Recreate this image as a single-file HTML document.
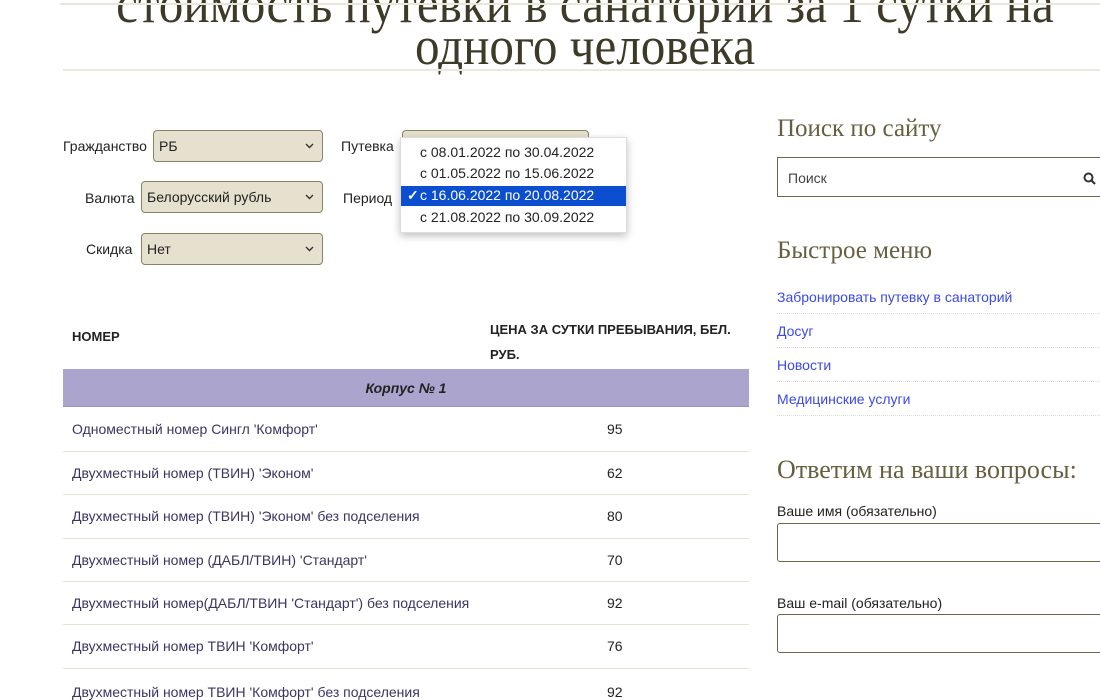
<!DOCTYPE html>
<html><head><meta charset="utf-8"><style>
*{margin:0;padding:0;box-sizing:border-box}
body{width:1100px;height:686px;overflow:hidden;background:#fff;position:relative;font-family:"Liberation Sans",sans-serif;font-size:14px;color:#222}
.a{position:absolute;white-space:nowrap}
.t{font-family:"Liberation Serif",serif;color:#3d3a28;font-size:54px;left:0;width:1170px;text-align:center;transform:scaleX(.91);transform-origin:585px 0;line-height:45px}
.sel{position:absolute;background:#e5e1ce;border:1px solid #8a8262;border-radius:4px;font-size:14px;padding:8px 5px;line-height:15px}
.sel svg{position:absolute;right:8px;top:12px}
.lab{position:absolute;font-size:14px;color:#222}
.row{position:absolute;left:63px;width:686px;height:1px;background:#e4e6d0}
.rn{position:absolute;left:72px;color:#3a3660;font-size:14px}
.rp{position:absolute;left:607px;color:#222;font-size:14px}
.h{font-family:"Liberation Serif",serif;color:#665f40;font-size:25px;position:absolute;left:777px}
.lk{position:absolute;left:777px;color:#3b49e8;font-size:14px}
.dot{position:absolute;left:777px;width:323px;border-top:1px dotted #ddd}
.inp{position:absolute;left:777px;width:330px;border:1px solid #6e6648;border-radius:3px}
</style></head><body>
<div class="a t" style="top:-18px">стоимость путевки в санаторий за 1 сутки на</div>
<div class="a t" style="top:24px">одного человека</div>
<div class="a" style="left:60px;top:3px;width:1040px;height:2px;background:#e9e7d8"></div>
<div class="a" style="left:63px;top:69px;width:1037px;height:2px;background:#ebe9dc"></div>

<div class="lab" style="left:63px;top:138px">Гражданство</div>
<div class="sel" style="left:153px;top:130px;width:170px;height:32px">РБ<svg width="9" height="6" viewBox="0 0 9 6"><path d="M1 1l3.5 3.5L8 1" fill="none" stroke="#333" stroke-width="1.4"/></svg></div>
<div class="lab" style="left:85px;top:190px">Валюта</div>
<div class="sel" style="left:141px;top:181px;width:182px;height:32px">Белорусский рубль<svg width="9" height="6" viewBox="0 0 9 6"><path d="M1 1l3.5 3.5L8 1" fill="none" stroke="#333" stroke-width="1.4"/></svg></div>
<div class="lab" style="left:86px;top:241px">Скидка</div>
<div class="sel" style="left:141px;top:233px;width:182px;height:32px">Нет<svg width="9" height="6" viewBox="0 0 9 6"><path d="M1 1l3.5 3.5L8 1" fill="none" stroke="#333" stroke-width="1.4"/></svg></div>
<div class="lab" style="left:341px;top:138px">Путевка</div>
<div class="sel" style="left:402px;top:130px;width:187px;height:32px"></div>
<div class="lab" style="left:343px;top:190px">Период</div>
<div class="a" style="left:400px;top:137px;width:227px;height:96px;background:#fff;border:1px solid #ddd;box-shadow:0 3px 8px rgba(0,0,0,.25);font-size:14px;color:#222">
<div style="position:absolute;left:19px;top:6px">с 08.01.2022 по 30.04.2022</div>
<div style="position:absolute;left:19px;top:27px">с 01.05.2022 по 15.06.2022</div>
<div style="position:absolute;left:0;top:48px;width:225px;height:20px;background:#0b4fd0;color:#fff"><span style="position:absolute;left:6px;top:1px;font-weight:bold">✓</span><span style="position:absolute;left:19px;top:1px">с 16.06.2022 по 20.08.2022</span></div>
<div style="position:absolute;left:19px;top:71px">с 21.08.2022 по 30.09.2022</div>
</div>

<div class="a" style="left:72px;top:329px;font-weight:bold;font-size:13px;color:#222">НОМЕР</div>
<div class="a" style="left:490px;top:317px;font-weight:bold;font-size:13px;color:#222;line-height:25px">ЦЕНА ЗА СУТКИ ПРЕБЫВАНИЯ, БЕЛ.<br>РУБ.</div>
<div class="a" style="left:63px;top:369px;width:686px;height:38px;background:#aba5cd;border-bottom:1px solid #9791bb;text-align:center;line-height:38px;font-style:italic;font-weight:bold;font-size:14px;color:#222">Корпус № 1</div>
<div class="rn" style="top:421px">Одноместный номер Сингл 'Комфорт'</div><div class="rp" style="top:421px">95</div>
<div class="row" style="top:451px"></div>
<div class="rn" style="top:465px">Двухместный номер (ТВИН) 'Эконом'</div><div class="rp" style="top:465px">62</div>
<div class="row" style="top:494px"></div>
<div class="rn" style="top:508px">Двухместный номер (ТВИН) 'Эконом' без подселения</div><div class="rp" style="top:508px">80</div>
<div class="row" style="top:538px"></div>
<div class="rn" style="top:552px">Двухместный номер (ДАБЛ/ТВИН) 'Стандарт'</div><div class="rp" style="top:552px">70</div>
<div class="row" style="top:581px"></div>
<div class="rn" style="top:595px">Двухместный номер(ДАБЛ/ТВИН 'Стандарт') без подселения</div><div class="rp" style="top:595px">92</div>
<div class="row" style="top:624px"></div>
<div class="rn" style="top:638px">Двухместный номер ТВИН 'Комфорт'</div><div class="rp" style="top:638px">76</div>
<div class="row" style="top:668px"></div>
<div class="rn" style="top:684px">Двухместный номер ТВИН 'Комфорт' без подселения</div><div class="rp" style="top:684px">92</div>

<div class="h" style="top:115px">Поиск по сайту</div>
<div class="inp" style="top:157px;height:40px;border-radius:0"><span style="position:absolute;left:10px;top:12px;font-size:14px;color:#444">Поиск</span>
<svg style="position:absolute;left:305px;top:14px" width="13" height="13" viewBox="0 0 13 13"><circle cx="5.5" cy="5.5" r="4" fill="none" stroke="#333" stroke-width="2"/><path d="M8.5 8.5L12 12" stroke="#333" stroke-width="2.2"/></svg></div>
<div class="h" style="top:237px">Быстрое меню</div>
<div class="lk" style="top:289px">Забронировать путевку в санаторий</div><div class="dot" style="top:313px"></div>
<div class="lk" style="top:323px">Досуг</div><div class="dot" style="top:347px"></div>
<div class="lk" style="top:357px">Новости</div><div class="dot" style="top:381px"></div>
<div class="lk" style="top:391px">Медицинские услуги</div><div class="dot" style="top:415px"></div>
<div class="h" style="top:455px;font-size:26px">Ответим на ваши вопросы:</div>
<div class="a" style="left:777px;top:503px;font-size:14px">Ваше имя (обязательно)</div>
<div class="inp" style="top:523px;height:39px"></div>
<div class="a" style="left:777px;top:595px;font-size:14px">Ваш e-mail (обязательно)</div>
<div class="inp" style="top:614px;height:39px"></div>
</body></html>
